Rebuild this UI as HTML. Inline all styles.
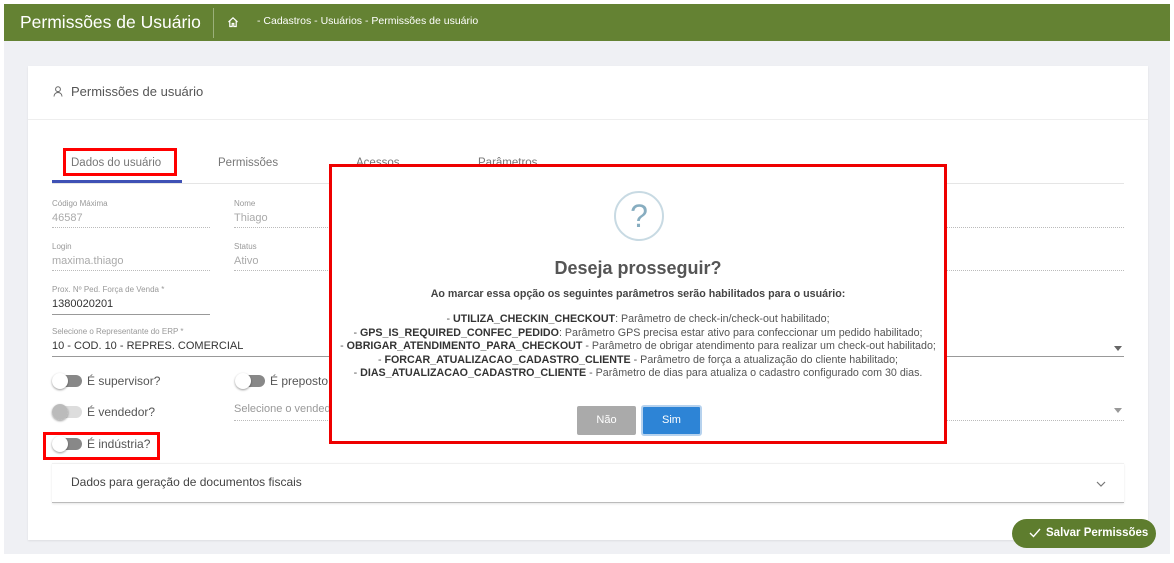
<!DOCTYPE html>
<html><head><meta charset="utf-8"><style>
*{margin:0;padding:0;box-sizing:border-box}
body{width:1174px;height:563px;background:#fff;font-family:"Liberation Sans",sans-serif;position:relative;overflow:hidden;color:#333}
.abs{position:absolute}
.hdr{left:4px;top:4px;width:1166px;height:37px;background:#648233;color:#fff}
.bg{left:4px;top:41px;width:1166px;height:513px;background:#eff0f4}
.card{left:28px;top:66px;width:1120px;height:474px;background:#fff;box-shadow:0 1px 2px rgba(0,0,0,.08)}
.lbl{font-size:8px;color:#999}
.val{font-size:11px;color:#aaa}
.dot{border-bottom:1px dotted #bbb}
.tog{width:28px;height:12px;border-radius:6px;background:#888}
.tog::before{content:"";position:absolute;left:-2px;top:-2px;width:16px;height:16px;border-radius:50%;background:#fff;box-shadow:0 1px 2px rgba(0,0,0,.4)}
.tl{font-size:12px;color:#555}
.red{border:3px solid #f00}
.modal{left:329px;top:164px;width:618px;height:280px;background:#fff;border:3px solid #e00;text-align:center}
.ml{font-size:10.7px;color:#555;line-height:13.5px}
.ml b{color:#333}
</style></head><body>
<div class="abs hdr">
  <div class="abs" style="left:16px;top:8px;font-size:17.5px">Permissões de Usuário</div>
  <div class="abs" style="left:209px;top:4px;width:1px;height:30px;background:#9bb07a"></div>
  <svg class="abs" style="left:223px;top:12px" width="12" height="12" viewBox="0 0 12 12" fill="none" stroke="#fff" stroke-width="1.2"><path d="M1.5 6L6 1.8 10.5 6M2.8 5v5.5h2.4V7.5h1.6v3h2.4V5"/></svg>
  <div class="abs" style="left:253px;top:11px;font-size:10.5px">- Cadastros - Usuários - Permissões de usuário</div>
</div>
<div class="abs bg"></div>
<div class="abs card">
  <svg class="abs" style="left:25px;top:20px" width="10" height="11" viewBox="0 0 10 11" fill="none" stroke="#666" stroke-width="1"><circle cx="5" cy="3.2" r="2.4"/><path d="M1 10.5c0-2.5 1.8-4 4-4s4 1.5 4 4"/></svg>
  <div class="abs" style="left:43px;top:18px;font-size:13px;color:#555">Permissões de usuário</div>
  <div class="abs" style="left:0;top:53px;width:1120px;height:1px;background:#eee"></div>
  <div class="abs" style="left:24px;top:117px;width:1072px;height:1px;background:#e5e5e5"></div>
  <div class="abs" style="left:24px;top:114px;width:130px;height:3px;background:#3f51b5"></div>
  <div class="abs" style="left:43px;top:91px;font-size:11.5px;color:#777">Dados do usuário</div>
  <div class="abs" style="left:190px;top:91px;font-size:11.5px;color:#777">Permissões</div>
  <div class="abs" style="left:328px;top:91px;font-size:11.5px;color:#777">Acessos</div>
  <div class="abs" style="left:450px;top:91px;font-size:11.5px;color:#777">Parâmetros</div>

  <div class="abs lbl" style="left:24px;top:133px">Código Máxima</div>
  <div class="abs val dot" style="left:24px;top:146px;width:158px;height:16px">46587</div>
  <div class="abs lbl" style="left:206px;top:133px">Nome</div>
  <div class="abs val dot" style="left:206px;top:146px;width:890px;height:16px">Thiago</div>
  <div class="abs lbl" style="left:24px;top:176px">Login</div>
  <div class="abs val dot" style="left:24px;top:189px;width:158px;height:16px">maxima.thiago</div>
  <div class="abs lbl" style="left:206px;top:176px">Status</div>
  <div class="abs val dot" style="left:206px;top:189px;width:890px;height:16px">Ativo</div>
  <div class="abs lbl" style="left:24px;top:219px">Prox. Nº Ped. Força de Venda *</div>
  <div class="abs" style="left:24px;top:232px;width:158px;height:17px;font-size:11px;color:#333;border-bottom:1px solid #999">1380020201</div>
  <div class="abs lbl" style="left:24px;top:261px">Selecione o Representante do ERP *</div>
  <div class="abs" style="left:24px;top:274px;width:1072px;height:17px;font-size:11px;color:#333;border-bottom:1px solid #999">10 - COD. 10 - REPRES. COMERCIAL</div>
  <div class="abs" style="left:1086px;top:280px;border:4px solid transparent;border-top:5px solid #666"></div>

  <div class="abs tog" style="left:26px;top:309px"></div>
  <div class="abs tl" style="left:59px;top:308px">É supervisor?</div>
  <div class="abs tog" style="left:209px;top:309px"></div>
  <div class="abs tl" style="left:242px;top:308px">É preposto</div>
  <div class="abs tog" style="left:26px;top:340px;background:#ddd"></div>
  <div class="abs" style="left:24px;top:338px;width:16px;height:16px;border-radius:50%;background:#bbb"></div>
  <div class="abs tl" style="left:59px;top:339px">É vendedor?</div>
  <div class="abs dot" style="left:206px;top:337px;width:890px;height:18px;font-size:11px;color:#999">Selecione o vendedor</div>
  <div class="abs" style="left:1086px;top:342px;border:4px solid transparent;border-top:5px solid #999"></div>
  <div class="abs tog" style="left:26px;top:372px"></div>
  <div class="abs tl" style="left:59px;top:371px">É indústria?</div>
  <div class="abs red" style="left:15px;top:366px;width:117px;height:28px"></div>
  <div class="abs red" style="left:35px;top:82px;width:114px;height:28px"></div>

  <div class="abs" style="left:24px;top:397px;width:1072px;height:40px;border-top:1px solid #f0f0f0;border-bottom:1px solid #bbb;box-shadow:0 1px 2px rgba(0,0,0,.1)"></div>
  <div class="abs" style="left:43px;top:409px;font-size:12px;color:#444">Dados para geração de documentos fiscais</div>
  <svg class="abs" style="left:1068px;top:415px" width="10" height="6" viewBox="0 0 10 6" fill="none" stroke="#777" stroke-width="1.2"><path d="M1 1l4 4 4-4"/></svg>
</div>

<div class="abs modal">
  <div class="abs" style="left:282px;top:24px;width:50px;height:50px;border-radius:50%;border:2px solid #c8dae3;color:#87adc0;font-size:32px;line-height:46px">?</div>
  <div class="abs" style="left:0;width:612px;top:91px;font-size:18px;font-weight:bold;color:#555">Deseja prosseguir?</div>
  <div class="abs ml" style="left:0;width:612px;top:121px;font-weight:bold;color:#444">Ao marcar essa opção os seguintes parâmetros serão habilitados para o usuário:</div>
  <div class="abs ml" style="left:0;width:612px;top:146px">
    - <b>UTILIZA_CHECKIN_CHECKOUT</b>: Parâmetro de check-in/check-out habilitado;<br>
    - <b>GPS_IS_REQUIRED_CONFEC_PEDIDO</b>: Parâmetro GPS precisa estar ativo para confeccionar um pedido habilitado;<br>
    - <b>OBRIGAR_ATENDIMENTO_PARA_CHECKOUT</b> - Parâmetro de obrigar atendimento para realizar um check-out habilitado;<br>
    - <b>FORCAR_ATUALIZACAO_CADASTRO_CLIENTE</b> - Parâmetro de força a atualização do cliente habilitado;<br>
    - <b>DIAS_ATUALIZACAO_CADASTRO_CLIENTE</b> - Parâmetro de dias para atualiza o cadastro configurado com 30 dias.
  </div>
  <div class="abs" style="left:245px;top:239px;width:59px;height:29px;background:#aaa;color:#fff;font-size:11px;line-height:29px;border-radius:2px">Não</div>
  <div class="abs" style="left:309px;top:238px;width:61px;height:31px;background:#2d84d6;color:#fff;font-size:11px;line-height:27px;border:2px solid #b6d2ee;border-radius:3px">Sim</div>
</div>

<div class="abs" style="left:1012px;top:519px;width:144px;height:29px;border-radius:15px;background:#5e7d2e;color:#fff;font-size:11.5px;font-weight:bold;line-height:29px;padding-left:34px;white-space:nowrap">Salvar Permissões</div>
<svg class="abs" style="left:1029px;top:528px" width="12" height="10" viewBox="0 0 12 10" fill="none" stroke="#fff" stroke-width="1.4"><path d="M1 5l3.5 3.5L11 1"/></svg>
</body></html>
